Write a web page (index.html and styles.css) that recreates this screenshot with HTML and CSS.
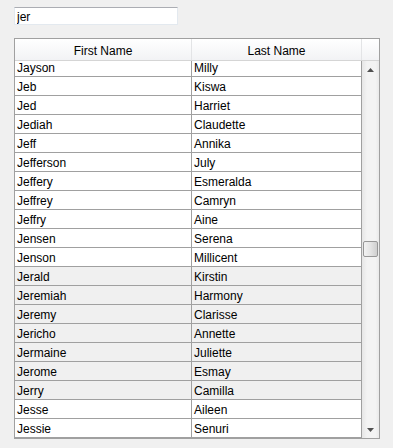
FILE: index.html
```html
<!DOCTYPE html>
<html lang="en">
<head>
    <meta charset="UTF-8">
    <title>Name Filter</title>
    <link rel="stylesheet" href="styles.css">
</head>
<body>
    <input class="filter" id="filter" type="text" value="jer">
    <div class="table">
        <div class="header">
            <div class="head-cell first">First Name</div>
            <div class="head-cell last">Last Name</div>
            <div class="head-cell spare"></div>
        </div>
        <div class="body">
            <div class="list">
                <div class="rows" id="rows"></div>
            </div>
            <div class="scrollbar">
                <div class="arrow">
                    <svg width="7" height="4" viewBox="0 0 7 4"><polygon points="3.5,0 7,4 0,4" fill="#505050"/></svg>
                </div>
                <div class="track">
                    <div class="thumb"></div>
                </div>
                <div class="arrow">
                    <svg width="7" height="4" viewBox="0 0 7 4"><polygon points="0,0 7,0 3.5,4" fill="#505050"/></svg>
                </div>
            </div>
        </div>
    </div>
    <script>
        const people = [
            ['Jayson', 'Milly'], ['Jeb', 'Kiswa'], ['Jed', 'Harriet'], ['Jediah', 'Claudette'],
            ['Jeff', 'Annika'], ['Jefferson', 'July'], ['Jeffery', 'Esmeralda'], ['Jeffrey', 'Camryn'],
            ['Jeffry', 'Aine'], ['Jensen', 'Serena'], ['Jenson', 'Millicent'], ['Jerald', 'Kirstin'],
            ['Jeremiah', 'Harmony'], ['Jeremy', 'Clarisse'], ['Jericho', 'Annette'], ['Jermaine', 'Juliette'],
            ['Jerome', 'Esmay'], ['Jerry', 'Camilla'], ['Jesse', 'Aileen'], ['Jessie', 'Senuri']
        ];

        const filter = document.getElementById('filter').value.toLowerCase();
        const rows = document.getElementById('rows');

        people.forEach(([first, last]) => {
            const row = document.createElement('div');
            row.className = 'row';
            if (first.toLowerCase().startsWith(filter)) row.classList.add('match');
            row.innerHTML = `<div class="cell first">${first}</div><div class="cell last">${last}</div>`;
            rows.appendChild(row);
        });
    </script>
</body>
</html>
```

FILE: styles.css
```css
body {
    margin: 0;
    padding: 7px 14px;
    background-color: #f0f0f0;
    font-family: "Liberation Sans", Arial, sans-serif;
    font-size: 12px;
    color: #000;
}
.filter {
    display: block;
    box-sizing: border-box;
    width: 164px;
    height: 18px;
    margin: 0;
    padding: 1px 2px 0;
    border: 1px solid #e3e9ef;
    border-top-color: #abadb3;
    background: white;
    font: inherit;
    outline: none;
}
.table {
    box-sizing: border-box;
    width: 366px;
    height: 401px;
    margin-top: 13px;
    border: 1px solid #a0a0a0;
    background: white;
    display: flex;
    flex-direction: column;
}
.header {
    display: flex;
    height: 21px;
    border-bottom: 1px solid #d5d5d5;
    background: linear-gradient(#ffffff, #f2f3f5);
}
.head-cell {
    box-sizing: border-box;
    display: flex;
    align-items: center;
    justify-content: center;
    border-right: 1px solid #e3e4e6;
    padding-top: 3px;
}
.head-cell.first {
    width: 177px;
}
.head-cell.last {
    width: 170px;
}
.head-cell.spare {
    width: 17px;
    border-right: none;
}
.body {
    flex: 1;
    display: flex;
    min-height: 0;
}
.list {
    width: 347px;
    overflow: hidden;
}
.rows {
    margin-top: -3px;
}
.row {
    display: flex;
    height: 18px;
    border-bottom: 1px solid #a0a0a0;
    background: white;
}
.row.match {
    background: #f0f0f0;
}
.cell {
    box-sizing: border-box;
    padding: 2px 0 0 2px;
    line-height: 16px;
    border-right: 1px solid #a0a0a0;
    white-space: nowrap;
    overflow: hidden;
}
.cell.first {
    width: 177px;
}
.cell.last {
    width: 170px;
}
.scrollbar {
    width: 17px;
    display: flex;
    flex-direction: column;
    background: linear-gradient(to right, #e6e6e6, #f3f3f3 30%, #f3f3f3 80%, #e9e9e9);
}
.arrow {
    height: 17px;
    display: flex;
    align-items: center;
    justify-content: center;
}
.track {
    flex: 1;
}
.thumb {
    box-sizing: border-box;
    width: 15px;
    height: 16px;
    margin: 163px 0 0 1px;
    border: 1px solid #979797;
    border-radius: 2px;
    background: linear-gradient(to right, #f2f2f2, #e4e4e4 50%, #cfcfcf);
}
```
